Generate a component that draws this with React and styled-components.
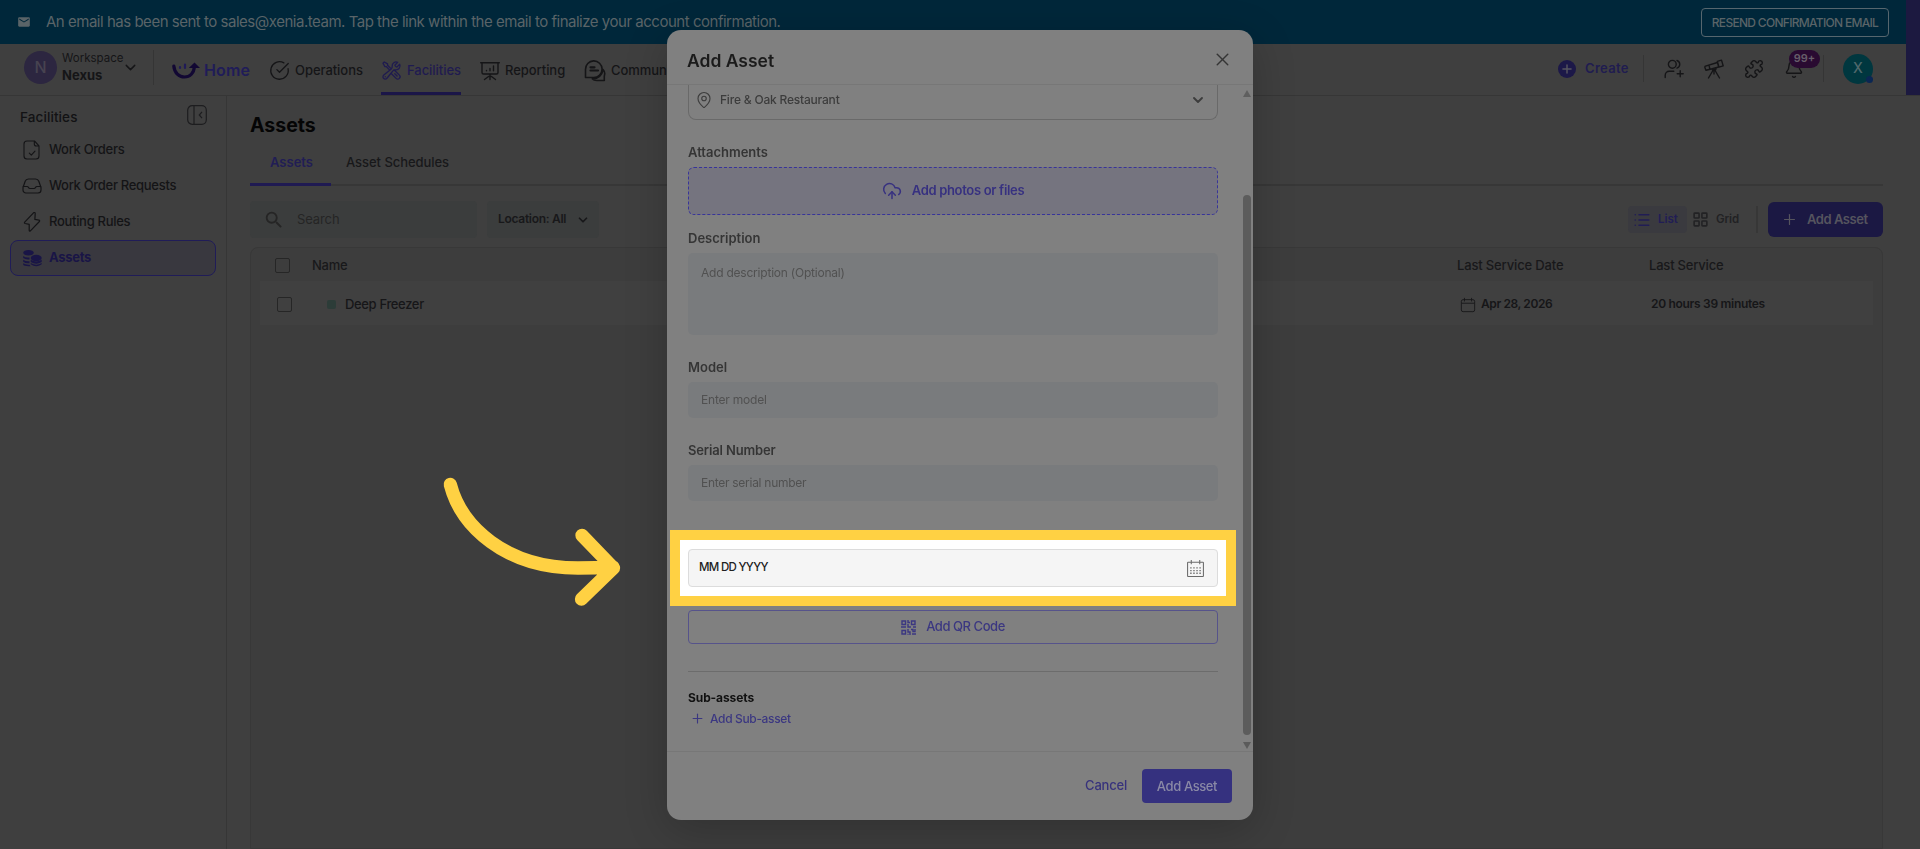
import styled, { createGlobalStyle } from "styled-components";
import {
  Bell,
  ChevronDown,
  CircleCheckBig,
  CloudUpload,
  LayoutGrid,
  List,
  MapPin,
  Plus,
  Puzzle,
  X,
} from "lucide-react";
import { HiOutlineWrenchScrewdriver } from "react-icons/hi2";
import { MdEmail, MdSearch } from "react-icons/md";

const GlobalStyle = createGlobalStyle`
  * {
    box-sizing: border-box;
  }

  body {
    margin: 0;
    overflow: hidden;
    background: #3f3f3f;
    color: #121214;
    font-family: Inter, "Liberation Sans", sans-serif;
    font-size: 13px;
  }

  svg {
    display: block;
    flex-shrink: 0;
  }
`;

const Page = styled.div`
  height: 849px;
  overflow: hidden;
  display: flex;
  flex-direction: column;
`;

const Text = styled.span`
  font-size: ${(p) => p.$size || 13}px;
  font-weight: ${(p) => p.$weight || 500};
  letter-spacing: ${(p) => p.$track || 0}px;
  color: ${(p) => p.$color || "inherit"};
  line-height: 1.2;
  white-space: nowrap;
`;

const Top = styled.div`
  display: flex;
  height: 95px;
  flex-shrink: 0;
`;
const TopMain = styled.div`
  flex: 1;
`;
const Strip = styled.div`
  width: 14px;
  background: #1c1940;
`;
const Banner = styled.div`
  height: 44px;
  padding: 0 17px;
  display: flex;
  align-items: center;
  background: #00273a;
  color: #5a6468;
`;
const BannerText = styled(Text)`
  margin-left: 15px;
  flex: 1;
`;
const Resend = styled.button`
  width: 188px;
  height: 29px;
  padding: 0;
  border: 1px solid #56666e;
  border-radius: 4px;
  background: none;
  color: inherit;
  font-family: inherit;
`;

const Header = styled.header`
  height: 51px;
  display: flex;
  align-items: center;
  padding: 0 33px 4px 24px;
  color: #151517;
`;
const Avatar = styled.div`
  width: 33px;
  height: 33px;
  border-radius: 50%;
  background: #2c2640;
  color: #474350;
  display: grid;
  place-items: center;
`;
const Workspace = styled.div`
  display: flex;
  flex-direction: column;
  gap: 2px;
  width: 58px;
  margin: 0 2px 0 5px;
`;
const HeaderRule = styled.div`
  width: 1px;
  height: ${(p) => p.$height}px;
  margin-left: ${(p) => p.$left || 0}px;
  background: #353535;
`;
const Brand = styled.div`
  display: flex;
  align-items: center;
  gap: 4px;
  width: 97px;
  margin: 7px 0 0 18px;
`;
const NavItem = styled.a`
  display: flex;
  align-items: center;
  gap: 5px;
  width: ${(p) => p.$width}px;
  margin: 4px 19px 0 0;
  padding-top: 2px;
  height: 51px;
  color: ${(p) => (p.$active ? "#1f1b50" : "inherit")};
  box-shadow: ${(p) => (p.$active ? "inset 0 -3px #1b1648" : "none")};
`;
const Actions = styled.div`
  margin: 2px 0 0 auto;
  display: flex;
  align-items: center;
`;
const Create = styled.div`
  display: flex;
  align-items: center;
  gap: 9px;
  width: 85px;
`;
const CreateDot = styled.div`
  width: 18px;
  height: 18px;
  border-radius: 50%;
  background: #1c1848;
  color: #56545f;
  display: grid;
  place-items: center;
`;
const ActionIcons = styled.div`
  display: flex;
  gap: 20px;
  margin: 0 19px 0 20px;
`;
const BellWrap = styled.div`
  position: relative;
`;
const Badge = styled.span`
  position: absolute;
  left: 5px;
  top: -9px;
  width: 31px;
  height: 18px;
  border-radius: 9px;
  background: #290a31;
  color: #665d69;
  display: grid;
  place-items: center;
`;
const UserAvatar = styled.div`
  position: relative;
  width: 30px;
  height: 30px;
  margin-left: 19px;
  border-radius: 50%;
  background: #00373f;
  color: #4f676b;
  display: grid;
  place-items: center;

  &::after {
    content: "";
    position: absolute;
    right: 0;
    bottom: 1px;
    width: 7px;
    height: 7px;
    border-radius: 50%;
    background: #0a2653;
  }
`;

const Body = styled.div`
  flex: 1;
  display: flex;
  border-top: 1px solid #363636;
`;
const Sidebar = styled.aside`
  width: 227px;
  padding: 9px 10px;
  border-right: 1px solid #363636;
`;
const SidebarHead = styled.div`
  display: flex;
  justify-content: space-between;
  align-items: center;
  height: 20px;
  padding: 0 9px 0 10px;
  margin-bottom: 7px;

  span {
    padding-top: 4px;
  }
`;
const SideItem = styled.div`
  display: flex;
  align-items: center;
  gap: 8px;
  height: 36px;
  padding: 0 12px;
  border: 1px solid ${(p) => (p.$active ? "#201c58" : "transparent")};
  border-radius: 8px;
  background: ${(p) => (p.$active ? "#39383f" : "none")};
  color: ${(p) => (p.$active ? "#191546" : "#141416")};
`;
const SideIcon = styled.span`
  width: 18px;
  display: flex;
  justify-content: center;
`;

const Main = styled.main`
  flex: 1;
  display: flex;
  flex-direction: column;
  padding: 18px 37px 0 23px;
`;
const Title = styled(Text).attrs({ as: "h1" })`
  margin: 0;
  height: 24px;
  color: #050505;
`;
const Tabs = styled.div`
  display: flex;
  height: 48px;
  border-bottom: 2px solid #373737;
`;
const Tab = styled.div`
  height: 48px;
  padding: 5px 20px 0;
  margin-right: -5px;
  width: ${(p) => p.$width}px;
  display: flex;
  align-items: center;
  color: ${(p) => (p.$active ? "#211d55" : "#18181a")};
  border-bottom: 3px solid ${(p) => (p.$active ? "#1f1a52" : "transparent")};
`;
const Toolbar = styled.div`
  display: flex;
  align-items: center;
  height: 37px;
  margin: 15px 0 9px;
`;
const SearchBox = styled.div`
  display: flex;
  align-items: center;
  gap: 12px;
  width: 227px;
  height: 37px;
  padding-left: 13px;
  border-radius: 4px;
  background: #3b3d3d;
  color: #252525;
`;
const LocationFilter = styled.div`
  display: flex;
  align-items: center;
  justify-content: space-between;
  width: 112px;
  height: 37px;
  margin-left: 10px;
  padding: 0 9px 0 11px;
  border-radius: 4px;
  background: #3b3d3d;
  color: #18181a;
`;
const Views = styled.div`
  display: flex;
  margin-left: auto;
  height: 27px;
`;
const View = styled.div`
  display: flex;
  align-items: center;
  gap: 7px;
  height: 27px;
  padding: 0 ${(p) => (p.$active ? 9 : 5)}px 0 5px;
  border-radius: 4px;
  background: ${(p) => (p.$active ? "#3a3a3f" : "none")};
  color: ${(p) => (p.$active ? "#211d55" : "#222224")};
`;
const ToolbarRule = styled.div`
  width: 2px;
  height: 27px;
  margin: 0 10px 0 12px;
  background: #373737;
`;
const AddButton = styled.button`
  display: flex;
  align-items: center;
  gap: 9px;
  width: 115px;
  height: 35px;
  padding: 0 0 0 13px;
  border: 0;
  border-radius: 6px;
  background: #1b1843;
  color: #55545e;
  font-family: inherit;
`;

const Table = styled.div`
  flex: 1;
  padding: 0 9px;
  border: 1px solid #383838;
  border-radius: 8px 8px 0 0;
  background: #3d3d3d;
`;
const TableHead = styled.div`
  display: grid;
  grid-template-columns: 37px 1145px 192px 1fr;
  align-items: center;
  height: 33px;
  padding: 2px 0 0 15px;
  color: #18181a;
`;
const TableRow = styled.div`
  display: grid;
  grid-template-columns: 50px 1133px 191px 1fr;
  align-items: center;
  height: 44px;
  padding: 3px 0 0 17px;
  background: #404040;
  color: #161618;
`;
const Checkbox = styled.span`
  width: 15px;
  height: 15px;
  border: 1px solid #262626;
  border-radius: 2px;
`;
const Cell = styled.div`
  display: flex;
  align-items: center;
  gap: ${(p) => p.$gap}px;
`;
const Status = styled.span`
  width: 9px;
  height: 9px;
  border-radius: 2px;
  background: #2c3c38;
`;

const Dialog = styled.section`
  position: fixed;
  left: 667px;
  top: 30px;
  width: 586px;
  height: 790px;
  display: flex;
  flex-direction: column;
  border-radius: 14px;
  background: #808080;
  box-shadow: 0 10px 44px 0 rgba(0, 0, 0, 0.2);
  color: #353535;
`;
const DialogHead = styled.div`
  height: 55px;
  padding: 5px 20px 0 20px;
  display: flex;
  align-items: center;
  justify-content: space-between;
  border-bottom: 1px solid #777;

  span {
    padding-top: 2px;
  }
`;
const DialogMain = styled.div`
  flex: 1;
  display: flex;
  justify-content: space-between;
  padding-right: 1px;
`;
const Form = styled.div`
  width: 530px;
  margin-left: 21px;
`;
const Select = styled.div`
  display: flex;
  align-items: center;
  gap: 7px;
  height: 35px;
  padding: 0 11px 4px 6px;
  border: 1px solid #696969;
  border-top: 0;
  border-radius: 0 0 8px 8px;
  color: #3c3c3c;

  span {
    flex: 1;
  }
`;
const Field = styled.div`
  position: relative;
  margin-top: ${(p) => p.$top}px;
`;
const Label = styled(Text)`
  display: block;
  height: 16px;
  margin-bottom: ${(p) => p.$gap ?? 6}px;
`;
const DropZone = styled.div`
  display: flex;
  align-items: center;
  justify-content: center;
  gap: 10px;
  height: 48px;
  border: 1px dashed #38349a;
  border-radius: 6px;
  background: #75747f;
  color: #373180;
`;
const Input = styled.div`
  height: ${(p) => p.$height || 36}px;
  padding: ${(p) => (p.$height ? 13 : 11)}px 13px;
  border-radius: 5px;
  background: #797b7d;
  color: #515151;
  line-height: 1;
`;
const DateInput = styled.div`
  display: flex;
  align-items: center;
  justify-content: space-between;
  height: 38px;
  padding: 0 12px 0 10px;
  border: 1px solid #dcdcdc;
  border-radius: 4px;
  background: #f5f5f5;
  color: #202020;

  svg {
    color: #6a6a6a;
  }
`;
/* Tour highlight that sits on top of the date field */
const Highlight = styled.div`
  position: absolute;
  left: -18px;
  top: 2px;
  width: 566px;
  padding: 9px 8px;
  border: 10px solid #ffd143;
  background: #fff;
`;
const QrButton = styled.div`
  display: flex;
  align-items: center;
  justify-content: center;
  gap: 10px;
  height: 34px;
  margin-top: 66px;
  border: 1px solid #56538b;
  border-radius: 4px;
  color: #3b3781;
`;
const Line = styled.div`
  height: 1px;
  margin: 27px 0 17px;
  background: #6c6c6c;
`;
const AddSub = styled.div`
  display: flex;
  align-items: center;
  gap: 5px;
  margin: 6px 0 0 2px;
  color: #3b3781;
`;
const Scroll = styled.div`
  width: 10px;
  display: flex;
  flex-direction: column;
  align-items: center;
  padding: 5px 0 2px;
`;
const ScrollArrow = styled.div`
  border: 4.5px solid transparent;
  border-top-width: ${(p) => (p.$down ? 7 : 0)}px;
  border-bottom-width: ${(p) => (p.$down ? 0 : 7)}px;
  border-top-color: ${(p) => (p.$down ? "#5b5b5b" : "transparent")};
  border-bottom-color: ${(p) => (p.$down ? "transparent" : "#5f5f5f")};
`;
const Thumb = styled.div`
  width: 8px;
  height: 540px;
  margin: 98px 0 7px;
  border-radius: 4px;
  background: #5c5c5c;
`;
const DialogFoot = styled.div`
  display: flex;
  align-items: center;
  justify-content: flex-end;
  gap: 15px;
  height: 69px;
  padding-right: 21px;
  border-top: 1px solid #777;
  color: #37327c;
`;
const Submit = styled.button`
  width: 90px;
  height: 34px;
  padding: 0;
  border: 0;
  border-radius: 4px;
  background: #35317f;
  color: #8a89a6;
  font-family: inherit;
`;

const TourArrow = styled.svg`
  position: fixed;
  left: 430px;
  top: 460px;
`;

function Logo() {
  return (
    <svg width="28" height="18" viewBox="0 0 28 18" fill="none">
      <path
        d="M1.800 4C2.500 11 7 15 12.500 15C18 15 22 11 22.300 5"
        stroke="#120833"
        strokeWidth="3.200"
        strokeLinecap="round"
      />
      <path d="M16.800 6L22.500 .5L28 6Z" fill="#120833" />
      <path
        d="M8 5.200v.8M13 2.500v3.500"
        stroke="#201b58"
        strokeWidth="2.200"
        strokeLinecap="round"
      />
    </svg>
  );
}

function LineIcon({ size = 20, width = 1.4, children }) {
  return (
    <svg
      width={size}
      height={size}
      viewBox="0 0 20 20"
      fill="none"
      stroke="currentColor"
      strokeWidth={width}
      strokeLinecap="round"
      strokeLinejoin="round"
    >
      {children}
    </svg>
  );
}

function ReportIcon() {
  return (
    <LineIcon>
      <path d="M.7 1.700h18.600M2 2v9.500q0 1.500 1.500 1.500h13q1.500 0 1.500-1.500V2M6.500 9.500v.3M10 7.500v2.300M13.500 5v4.800M10 13v3M4.500 18.500l4-3h3l4 3M10 16v2.500" />
    </LineIcon>
  );
}

function ChatIcon() {
  return (
    <svg width="22" height="22" viewBox="0 0 22 22" fill="none" stroke="currentColor" strokeWidth="1.600" strokeLinejoin="round" strokeLinecap="round">
      <path d="M1.500 17.500V9.500a8.300 8.300 0 1 1 8.300 8Z" />
      <path d="M6.500 7.300h4M6.500 10.500h7.500" strokeWidth="2.200" />
      <path d="M19 9.500c2 2 2 4.500 1.300 6.500v4.500h-7.500c-2 0-3.500-.5-4.500-1.700C14 18.500 18 15.500 19 9.500Z" />
    </svg>
  );
}

function InviteIcon() {
  return (
    <LineIcon>
      <circle cx="8.300" cy="5.300" r="3.900" />
      <path d="M13 1.500a4 4 0 0 1 0 7.600M1.200 18.500v-2.300a4 4 0 0 1 4-4h4.600M16.200 11.700v6M13.200 14.700h6" />
    </LineIcon>
  );
}

function TelescopeIcon() {
  return (
    <LineIcon>
      <path d="M.9 8.500l1 2.700 6.300-1.500 6.500-1.700-1.300-4.500L1.500 7.200a1 1 0 0 0-.6 1.300ZM13.300 2.300l4.200-1.200 1.700 5.800-4.200 1.200ZM5 6.300l.9 3.700M9.500 10.500L4.500 19M10.500 10.500l5 8.500M8 9.800a2 2 0 0 0 4-.8M10 11v4" />
    </LineIcon>
  );
}

function OrderIcon() {
  return (
    <LineIcon width={1.1}>
      <path d="M12.500 1H5a3 3 0 0 0-3 3v12a3 3 0 0 0 3 3h9a3 3 0 0 0 3-3V5.800ZM12.300 1v3q0 2 2 2H17M7.300 13.200l2 2 3.700-4" />
    </LineIcon>
  );
}

function RequestIcon() {
  return (
    <LineIcon width={1.2}>
      <path d="M1 11.500L3.200 5.300Q4 3 6.500 3h7Q16 3 16.800 5.300L19 11.500V14a3 3 0 0 1-3 3H4a3 3 0 0 1-3-3ZM1 10.500h4q1 0 1.500 1t1.500 1h4q1 0 1.500-1t1.500-1h4" />
    </LineIcon>
  );
}

function BoltIcon() {
  return (
    <LineIcon width={1.2}>
      <path d="M11.500.8L2.700 10.200q-.7 1 .5 1.300l4 .8v6.200q.2 1.200 1.200.3l9-9.300q.7-1-.5-1.300l-4-.8.3-6q-.2-1.500-1.700-.6Z" />
    </LineIcon>
  );
}

function AssetIcon() {
  return (
    <svg width="19" height="17" viewBox="0 0 19 17" fill="currentColor">
      <ellipse cx="5.500" cy="2.800" rx="5.300" ry="2.800" />
      <path d="M.2 6q2.500 2 6.300 1.400v2Q2.500 9.800.2 8ZM.2 9.800q2.500 1.800 6.300 1.500v1.900Q2.500 13.500.2 11.700ZM.2 13.300q2.500 1.700 6.300 1.400l1 1.500Q1.500 16.500.2 14.800Z" />
      <ellipse cx="13.200" cy="8" rx="5.500" ry="3.200" />
      <path d="M7.700 9.800q5.500 3.500 11 0v2.200q-5.500 3.300-11 0ZM7.700 13q5.500 3.300 11 0v1.300q-5.500 4-11 0Z" />
    </svg>
  );
}

function CollapseIcon() {
  return (
    <svg width="20" height="20" viewBox="0 0 20 20" fill="none" stroke="#1d1d1f" strokeWidth="1.200">
      <rect x=".7" y=".7" width="18.600" height="18.600" rx="4.500" />
      <path d="M7 1v18M15 6.800L12.300 10l2.700 3.200" />
    </svg>
  );
}

function CalendarIcon({ size, dots }) {
  return (
    <svg width={size} height={size} viewBox="0 0 18 18" fill="none" stroke="currentColor">
      <rect x="1.500" y="3" width="15" height="13.500" rx={dots ? 0.5 : 2} />
      <path d="M5 1v4M13 1v4" />
      {dots ? (
        <path d="M4 8.500h10.500M4 11h10.500M4 13.500h10.500" strokeWidth="1.200" strokeDasharray="1.300 1.600" />
      ) : (
        <path d="M2 7h14" />
      )}
    </svg>
  );
}

function QrIcon() {
  return (
    <svg width="15" height="15" viewBox="0 0 15 15" fill="none" stroke="currentColor" strokeWidth="1.400">
      <path d="M1 1h3.500v3.500H1ZM10.500 1H14v3.500h-3.500ZM1 10.500h3.500V14H1Z" />
      <path d="M7 0v2.500h2M7 4v3h3M0 7h5M12 7h3M7 9v3h2v3M10 9.500h2v2h2V9M11 14h4M6.500 14.500h1" />
    </svg>
  );
}

const sideItems = [
  { label: "Work Orders", icon: <OrderIcon /> },
  { label: "Work Order Requests", icon: <RequestIcon /> },
  { label: "Routing Rules", icon: <BoltIcon /> },
  { label: "Assets", icon: <AssetIcon />, active: true },
];

const navItems = [
  { label: "Operations", icon: <CircleCheckBig size={21} strokeWidth={1.5} />, width: 93 },
  { label: "Facilities", icon: <HiOutlineWrenchScrewdriver size={21} />, width: 80, active: true },
  { label: "Reporting", icon: <ReportIcon />, width: 85 },
  { label: "Communi", icon: <ChatIcon />, width: 90 },
];

function TopBar() {
  return (
    <Top>
      <TopMain>
        <Banner>
          <MdEmail size={14} />
          <BannerText $size={15} $weight={400} $track={-0.48}>
            An email has been sent to sales@xenia.team. Tap the link within the
            email to finalize your account confirmation.
          </BannerText>
          <Resend>
            <Text $size={12} $track={-0.7}>RESEND CONFIRMATION EMAIL</Text>
          </Resend>
        </Banner>
        <Header>
          <Avatar>
            <Text $size={16}>N</Text>
          </Avatar>
          <Workspace>
            <Text $size={11.5} $weight={400}>Workspace</Text>
            <Text $size={13} $weight={700}>Nexus</Text>
          </Workspace>
          <ChevronDown size={17} strokeWidth={2} />
          <HeaderRule $height={35} $left={14} />
          <Brand>
            <Logo />
            <Text $size={16} $weight={600} $color="#201c58" $track={0.15}>Home</Text>
          </Brand>
          {navItems.map((item) => (
            <NavItem key={item.label} $width={item.width} $active={item.active}>
              {item.icon}
              <Text $track={-0.05}>{item.label}</Text>
            </NavItem>
          ))}
          <Actions>
            <Create>
              <CreateDot>
                <Plus size={14} strokeWidth={2.5} />
              </CreateDot>
              <Text $weight={600} $color="#201c50" $track={0.3}>Create</Text>
            </Create>
            <HeaderRule $height={27} />
            <ActionIcons>
              <InviteIcon />
              <TelescopeIcon />
              <Puzzle size={20} strokeWidth={1.7} />
              <BellWrap>
                <Bell size={20} strokeWidth={1.7} />
                <Badge>
                  <Text $size={11} $weight={600}>99+</Text>
                </Badge>
              </BellWrap>
            </ActionIcons>
            <HeaderRule $height={27} />
            <UserAvatar>
              <Text $size={14}>X</Text>
            </UserAvatar>
          </Actions>
        </Header>
      </TopMain>
      <Strip />
    </Top>
  );
}

function AssetsPage() {
  return (
    <Main>
      <Title $size={19.5} $weight={700}>Assets</Title>
      <Tabs>
        <Tab $width={81} $active>
          <Text $weight={600}>Assets</Text>
        </Tab>
        <Tab>
          <Text $track={-0.05}>Asset Schedules</Text>
        </Tab>
      </Tabs>
      <Toolbar>
        <SearchBox>
          <MdSearch size={22} />
          <Text $weight={400} $track={-0.1}>Search</Text>
        </SearchBox>
        <LocationFilter>
          <Text $size={12} $weight={600} $track={-0.3}>Location: All</Text>
          <ChevronDown size={14} strokeWidth={3} />
        </LocationFilter>
        <Views>
          <View $active>
            <List size={18} strokeWidth={2.2} />
            <Text $size={11.5} $weight={600}>List</Text>
          </View>
          <View>
            <LayoutGrid size={17} strokeWidth={2.2} />
            <Text $size={11.5} $weight={600} $track={-0.1}>Grid</Text>
          </View>
        </Views>
        <ToolbarRule />
        <AddButton>
          <Plus size={17} strokeWidth={1.7} />
          <Text $weight={600} $track={-0.45}>Add Asset</Text>
        </AddButton>
      </Toolbar>
      <Table>
        <TableHead>
          <Checkbox />
          <Text $track={-0.25}>Name</Text>
          <Text $track={-0.15}>Last Service Date</Text>
          <Text $track={-0.2}>Last Service</Text>
        </TableHead>
        <TableRow>
          <Checkbox />
          <Cell $gap={9}>
            <Status />
            <Text $track={-0.35}>Deep Freezer</Text>
          </Cell>
          <Cell $gap={5}>
            <CalendarIcon size={16} />
            <Text $size={12} $weight={600} $track={-0.4}>Apr 28, 2026</Text>
          </Cell>
          <Text $size={12} $weight={600} $track={-0.3}>20 hours 39 minutes</Text>
        </TableRow>
      </Table>
    </Main>
  );
}

function AddAssetDialog() {
  return (
    <Dialog>
      <DialogHead>
        <Text $size={17.5} $weight={600} $color="#1b1b1b">Add Asset</Text>
        <X size={21} strokeWidth={1.7} />
      </DialogHead>
      <DialogMain>
        <Form>
          <Select>
            <MapPin size={18} strokeWidth={1.5} />
            <Text $size={12} $track={-0.2}>Fire &amp; Oak Restaurant</Text>
            <ChevronDown size={16} strokeWidth={2.8} />
          </Select>
          <Field $top={25}>
            <Label $weight={600}>Attachments</Label>
            <DropZone>
              <CloudUpload size={20} strokeWidth={1.8} />
              <Text $weight={600} $track={-0.32}>Add photos or files</Text>
            </DropZone>
          </Field>
          <Field $top={16}>
            <Label $weight={600}>Description</Label>
            <Input $height={82}>
              <Text $size={12} $weight={400} $track={-0.22}>Add description (Optional)</Text>
            </Input>
          </Field>
          <Field $top={25}>
            <Label $weight={600}>Model</Label>
            <Input>
              <Text $size={12} $weight={400} $track={-0.2}>Enter model</Text>
            </Input>
          </Field>
          <Field $top={25}>
            <Label $weight={600} $track={-0.15}>Serial Number</Label>
            <Input>
              <Text $size={12} $weight={400} $track={-0.28}>Enter serial number</Text>
            </Input>
          </Field>
          <Field $top={27}>
            <Label $weight={600} $gap={0}>Purchase Date</Label>
            <Highlight>
              <DateInput>
                <Text $size={11.5} $track={-0.7}>MM DD YYYY</Text>
                <CalendarIcon size={19} dots />
              </DateInput>
            </Highlight>
          </Field>
          <QrButton>
            <QrIcon />
            <Text $track={-0.45}>Add QR Code</Text>
          </QrButton>
          <Line />
          <Text $size={12} $weight={700} $color="#111" $track={-0.1}>Sub-assets</Text>
          <AddSub>
            <Plus size={15} strokeWidth={1.8} />
            <Text $size={12} $track={-0.35}>Add Sub-asset</Text>
          </AddSub>
        </Form>
        <Scroll>
          <ScrollArrow />
          <Thumb />
          <ScrollArrow $down />
        </Scroll>
      </DialogMain>
      <DialogFoot>
        <Text $track={-0.2}>Cancel</Text>
        <Submit>
          <Text $track={-0.4}>Add Asset</Text>
        </Submit>
      </DialogFoot>
    </Dialog>
  );
}

function App() {
  return (
    <Page>
      <GlobalStyle />
      <TopBar />
      <Body>
        <Sidebar>
          <SidebarHead>
            <Text $size={13.5} $track={0.1}>Facilities</Text>
            <CollapseIcon />
          </SidebarHead>
          {sideItems.map((item) => (
            <SideItem key={item.label} $active={item.active}>
              <SideIcon>{item.icon}</SideIcon>
              <Text $weight={item.active ? 700 : 500} $track={-0.3}>
                {item.label}
              </Text>
            </SideItem>
          ))}
        </Sidebar>
        <AssetsPage />
      </Body>
      <AddAssetDialog />
      <TourArrow width="200" height="150" viewBox="0 0 200 150" fill="none">
        <path
          d="M20.300 24.500C31 66 75 108 148 108Q166 108 183 107M152 75.300L183.500 108L151.500 139"
          stroke="#ffd143"
          strokeWidth="13.300"
          strokeLinecap="round"
          strokeLinejoin="round"
        />
      </TourArrow>
    </Page>
  );
}

export default App;
